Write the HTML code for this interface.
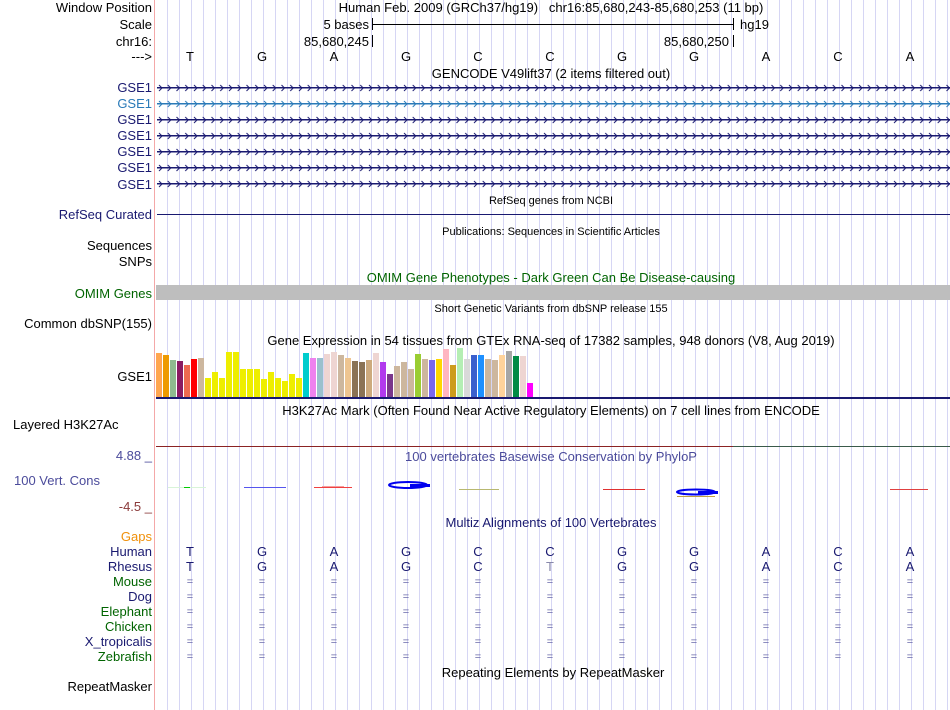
<!DOCTYPE html>
<html><head><meta charset="utf-8"><style>
html,body{margin:0;padding:0;background:#fff;width:950px;height:710px;overflow:hidden}
svg{display:block;font-family:"Liberation Sans",sans-serif}
</style></head><body>
<svg width="950" height="710" viewBox="0 0 950 710" xmlns="http://www.w3.org/2000/svg">
<defs>
<pattern id="grid" x="155" y="0" width="12" height="710" patternUnits="userSpaceOnUse">
<rect x="0" y="0" width="1" height="710" fill="#d6d6f4"/>
</pattern>
<pattern id="cD" x="0" y="0" width="8.75" height="8" patternUnits="userSpaceOnUse"><path d="M2,1 L5,4 L2,7" fill="none" stroke="#191970" stroke-width="1"/></pattern>
<pattern id="cL" x="0" y="0" width="8.75" height="8" patternUnits="userSpaceOnUse"><path d="M2,1 L5,4 L2,7" fill="none" stroke="#2a7ab8" stroke-width="1"/></pattern>
</defs>
<rect x="156" y="0" width="794" height="710" fill="url(#grid)"/>
<rect x="154" y="0" width="1" height="710" fill="#f4a8a8"/>

<g font-size="13" fill="#000" text-anchor="end">
<text x="152" y="12">Window Position</text>
<text x="152" y="29">Scale</text>
<text x="152" y="46">chr16:</text>
<text x="152" y="61">---&gt;</text>
</g>
<g font-size="13" fill="#191970" text-anchor="end">
<text x="152" y="92">GSE1</text>
<text x="152" y="108" fill="#2a7ab8">GSE1</text>
<text x="152" y="124">GSE1</text>
<text x="152" y="140">GSE1</text>
<text x="152" y="156">GSE1</text>
<text x="152" y="172">GSE1</text>
<text x="152" y="189">GSE1</text>
<text x="152" y="219">RefSeq Curated</text>
</g>
<g font-size="13" fill="#000" text-anchor="end">
<text x="152" y="250">Sequences</text>
<text x="152" y="266">SNPs</text>
<text x="152" y="298" fill="#006400">OMIM Genes</text>
<text x="152" y="328">Common dbSNP(155)</text>
<text x="152" y="381">GSE1</text>
</g>
<text x="13" y="429" font-size="13">Layered H3K27Ac</text>
<g font-size="13" text-anchor="end">
<text x="152" y="460" fill="#4b4b9b">4.88 _</text>
<text x="100" y="485" fill="#4b4b9b">100 Vert. Cons</text>
<text x="152" y="511" fill="#8b3a3a">-4.5 _</text>
<text x="152" y="541" fill="#f0900a">Gaps</text>
<text x="152" y="556" fill="#191970">Human</text>
<text x="152" y="571" fill="#191970">Rhesus</text>
<text x="152" y="586" fill="#006400">Mouse</text>
<text x="152" y="601" fill="#191970">Dog</text>
<text x="152" y="616" fill="#006400">Elephant</text>
<text x="152" y="631" fill="#006400">Chicken</text>
<text x="152" y="646" fill="#191970">X_tropicalis</text>
<text x="152" y="661" fill="#006400">Zebrafish</text>
<text x="152" y="691" fill="#000">RepeatMasker</text>
</g>

<!-- header -->
<g font-size="13" fill="#000">
<text x="551" y="12" text-anchor="middle">Human Feb. 2009 (GRCh37/hg19)&#160;&#160;&#160;chr16:85,680,243-85,680,253 (11 bp)</text>
<text x="369" y="29" text-anchor="end">5 bases</text>
<text x="740" y="29">hg19</text>
<text x="369" y="46" text-anchor="end">85,680,245</text>
<text x="729" y="46" text-anchor="end">85,680,250</text>
</g>
<rect x="372" y="18" width="1" height="12" fill="#000"/>
<rect x="372" y="24" width="362" height="1" fill="#000"/>
<rect x="733" y="18" width="1" height="12" fill="#000"/>
<rect x="372" y="35" width="1" height="12" fill="#000"/>
<rect x="733" y="35" width="1" height="12" fill="#000"/>
<g font-size="13" fill="#000" text-anchor="middle">
<text x="190" y="61">T</text><text x="262" y="61">G</text><text x="334" y="61">A</text><text x="406" y="61">G</text><text x="478" y="61">C</text><text x="550" y="61">C</text><text x="622" y="61">G</text><text x="694" y="61">G</text><text x="766" y="61">A</text><text x="838" y="61">C</text><text x="910" y="61">A</text>
<text x="551" y="78">GENCODE V49lift37 (2 items filtered out)</text>
</g>

<!-- GSE1 transcripts -->
<rect x="157" y="87" width="793" height="1.5" fill="#191970"/>
<rect x="157" y="103" width="793" height="1.5" fill="#2a7ab8"/>
<rect x="157" y="119" width="793" height="1.5" fill="#191970"/>
<rect x="157" y="135" width="793" height="1.5" fill="#191970"/>
<rect x="157" y="151" width="793" height="1.5" fill="#191970"/>
<rect x="157" y="167" width="793" height="1.5" fill="#191970"/>
<rect x="157" y="183" width="793" height="1.5" fill="#191970"/>
<g transform="translate(157,84)"><rect width="793" height="8" fill="url(#cD)"/></g>
<g transform="translate(157,100)"><rect width="793" height="8" fill="url(#cL)"/></g>
<g transform="translate(157,116)"><rect width="793" height="8" fill="url(#cD)"/></g>
<g transform="translate(157,132)"><rect width="793" height="8" fill="url(#cD)"/></g>
<g transform="translate(157,148)"><rect width="793" height="8" fill="url(#cD)"/></g>
<g transform="translate(157,164)"><rect width="793" height="8" fill="url(#cD)"/></g>
<g transform="translate(157,180)"><rect width="793" height="8" fill="url(#cD)"/></g>

<text x="551" y="204" font-size="11" text-anchor="middle">RefSeq genes from NCBI</text>
<rect x="157" y="214" width="793" height="1" fill="#191970"/>
<text x="551" y="235" font-size="11" text-anchor="middle">Publications: Sequences in Scientific Articles</text>
<text x="551" y="282" font-size="13" text-anchor="middle" fill="#006400">OMIM Gene Phenotypes - Dark Green Can Be Disease-causing</text>
<rect x="156" y="285" width="794" height="15" fill="#bebebe"/>
<text x="551" y="312" font-size="11" text-anchor="middle">Short Genetic Variants from dbSNP release 155</text>
<text x="551" y="345" font-size="13" text-anchor="middle">Gene Expression in 54 tissues from GTEx RNA-seq of 17382 samples, 948 donors (V8, Aug 2019)</text>

<!-- GTEx bars -->
<g>
<rect x="156" y="353" width="6" height="44" fill="#FFA54F"/>
<rect x="163" y="355" width="6" height="42" fill="#EE9A00"/>
<rect x="170" y="360" width="6" height="37" fill="#8FBC8F"/>
<rect x="177" y="361" width="6" height="36" fill="#8B1C62"/>
<rect x="184" y="365" width="6" height="32" fill="#EE6A50"/>
<rect x="191" y="359" width="6" height="38" fill="#FF0000"/>
<rect x="198" y="358" width="6" height="39" fill="#CDB79E"/>
<rect x="205" y="378" width="6" height="19" fill="#EEEE00"/>
<rect x="212" y="372" width="6" height="25" fill="#EEEE00"/>
<rect x="219" y="378" width="6" height="19" fill="#EEEE00"/>
<rect x="226" y="352" width="6" height="45" fill="#EEEE00"/>
<rect x="233" y="352" width="6" height="45" fill="#EEEE00"/>
<rect x="240" y="369" width="6" height="28" fill="#EEEE00"/>
<rect x="247" y="369" width="6" height="28" fill="#EEEE00"/>
<rect x="254" y="369" width="6" height="28" fill="#EEEE00"/>
<rect x="261" y="379" width="6" height="18" fill="#EEEE00"/>
<rect x="268" y="372" width="6" height="25" fill="#EEEE00"/>
<rect x="275" y="378" width="6" height="19" fill="#EEEE00"/>
<rect x="282" y="381" width="6" height="16" fill="#EEEE00"/>
<rect x="289" y="374" width="6" height="23" fill="#EEEE00"/>
<rect x="296" y="378" width="6" height="19" fill="#EEEE00"/>
<rect x="303" y="353" width="6" height="44" fill="#00CDCD"/>
<rect x="310" y="358" width="6" height="39" fill="#EE82EE"/>
<rect x="317" y="358" width="6" height="39" fill="#9AC0CD"/>
<rect x="324" y="354" width="6" height="43" fill="#EED5D2"/>
<rect x="331" y="352" width="6" height="45" fill="#EED5D2"/>
<rect x="338" y="355" width="6" height="42" fill="#CDB79E"/>
<rect x="345" y="358" width="6" height="39" fill="#EEC591"/>
<rect x="352" y="361" width="6" height="36" fill="#8B7355"/>
<rect x="359" y="362" width="6" height="35" fill="#8B7355"/>
<rect x="366" y="360" width="6" height="37" fill="#CDAA7D"/>
<rect x="373" y="353" width="6" height="44" fill="#EED5D2"/>
<rect x="380" y="362" width="6" height="35" fill="#B23AEE"/>
<rect x="387" y="374" width="6" height="23" fill="#7A378B"/>
<rect x="394" y="366" width="6" height="31" fill="#CDB79E"/>
<rect x="401" y="362" width="6" height="35" fill="#CDB79E"/>
<rect x="408" y="369" width="6" height="28" fill="#CDB79E"/>
<rect x="415" y="354" width="6" height="43" fill="#9ACD32"/>
<rect x="422" y="359" width="6" height="38" fill="#CDB79E"/>
<rect x="429" y="360" width="6" height="37" fill="#7A67EE"/>
<rect x="436" y="359" width="6" height="38" fill="#FFD700"/>
<rect x="443" y="349" width="6" height="48" fill="#FFB6C1"/>
<rect x="450" y="365" width="6" height="32" fill="#CD9B1D"/>
<rect x="457" y="348" width="6" height="49" fill="#B4EEB4"/>
<rect x="464" y="359" width="6" height="38" fill="#D9D9D9"/>
<rect x="471" y="355" width="6" height="42" fill="#3A5FCD"/>
<rect x="478" y="355" width="6" height="42" fill="#1E90FF"/>
<rect x="485" y="359" width="6" height="38" fill="#CDB79E"/>
<rect x="492" y="360" width="6" height="37" fill="#CDB79E"/>
<rect x="499" y="355" width="6" height="42" fill="#FFD39B"/>
<rect x="506" y="351" width="6" height="46" fill="#A6A6A6"/>
<rect x="513" y="356" width="6" height="41" fill="#008B45"/>
<rect x="520" y="356" width="6" height="41" fill="#EED5D2"/>
<rect x="527" y="383" width="6" height="14" fill="#FF00FF"/>
</g>
<rect x="156" y="397" width="794" height="2" fill="#191970"/>

<text x="551" y="415" font-size="13" text-anchor="middle">H3K27Ac Mark (Often Found Near Active Regulatory Elements) on 7 cell lines from ENCODE</text>
<rect x="156" y="446" width="577" height="1" fill="#8b2323"/>
<rect x="733" y="446" width="217" height="1" fill="#3a5a4a"/>

<text x="551" y="461" font-size="13" text-anchor="middle" fill="#4b4b9b">100 vertebrates Basewise Conservation by PhyloP</text>
<rect x="168" y="487" width="38" height="1" fill="#d8f4d8"/><rect x="184" y="487" width="6" height="1" fill="#00cc00"/>
<rect x="244" y="487" width="42" height="1" fill="#5555ee"/>
<rect x="314" y="487" width="38" height="1" fill="#f04040"/><rect x="322" y="486" width="22" height="1" fill="#f5a0a0"/>
<ellipse cx="408" cy="485" rx="19" ry="3" fill="none" stroke="#0000ee" stroke-width="2"/>
<rect x="410" y="484" width="20" height="3" fill="#0000ee"/>
<rect x="459" y="489" width="40" height="1" fill="#b8b870"/>
<rect x="603" y="489" width="42" height="1" fill="#e03030"/>
<ellipse cx="696" cy="492" rx="19" ry="2.5" fill="none" stroke="#0000ee" stroke-width="2"/>
<rect x="698" y="491" width="20" height="3" fill="#0000ee"/>
<rect x="677" y="496" width="38" height="1" fill="#c0a040"/>
<rect x="890" y="489" width="38" height="1" fill="#e04040"/>

<text x="551" y="527" font-size="13" text-anchor="middle" fill="#191970">Multiz Alignments of 100 Vertebrates</text>
<g font-size="13" fill="#191970" text-anchor="middle">
<text x="190" y="556">T</text><text x="262" y="556">G</text><text x="334" y="556">A</text><text x="406" y="556">G</text><text x="478" y="556">C</text><text x="550" y="556">C</text><text x="622" y="556">G</text><text x="694" y="556">G</text><text x="766" y="556">A</text><text x="838" y="556">C</text><text x="910" y="556">A</text>
<text x="190" y="571">T</text><text x="262" y="571">G</text><text x="334" y="571">A</text><text x="406" y="571">G</text><text x="478" y="571">C</text><text x="550" y="571" fill="#8888aa">T</text><text x="622" y="571">G</text><text x="694" y="571">G</text><text x="766" y="571">A</text><text x="838" y="571">C</text><text x="910" y="571">A</text>
</g>
<g font-size="11" fill="#6a6aaa" text-anchor="middle">
<text x="190" y="585">=</text><text x="262" y="585">=</text><text x="334" y="585">=</text><text x="406" y="585">=</text><text x="478" y="585">=</text><text x="550" y="585">=</text><text x="622" y="585">=</text><text x="694" y="585">=</text><text x="766" y="585">=</text><text x="838" y="585">=</text><text x="910" y="585">=</text>
<text x="190" y="600">=</text><text x="262" y="600">=</text><text x="334" y="600">=</text><text x="406" y="600">=</text><text x="478" y="600">=</text><text x="550" y="600">=</text><text x="622" y="600">=</text><text x="694" y="600">=</text><text x="766" y="600">=</text><text x="838" y="600">=</text><text x="910" y="600">=</text>
<text x="190" y="615">=</text><text x="262" y="615">=</text><text x="334" y="615">=</text><text x="406" y="615">=</text><text x="478" y="615">=</text><text x="550" y="615">=</text><text x="622" y="615">=</text><text x="694" y="615">=</text><text x="766" y="615">=</text><text x="838" y="615">=</text><text x="910" y="615">=</text>
<text x="190" y="630">=</text><text x="262" y="630">=</text><text x="334" y="630">=</text><text x="406" y="630">=</text><text x="478" y="630">=</text><text x="550" y="630">=</text><text x="622" y="630">=</text><text x="694" y="630">=</text><text x="766" y="630">=</text><text x="838" y="630">=</text><text x="910" y="630">=</text>
<text x="190" y="645">=</text><text x="262" y="645">=</text><text x="334" y="645">=</text><text x="406" y="645">=</text><text x="478" y="645">=</text><text x="550" y="645">=</text><text x="622" y="645">=</text><text x="694" y="645">=</text><text x="766" y="645">=</text><text x="838" y="645">=</text><text x="910" y="645">=</text>
<text x="190" y="660">=</text><text x="262" y="660">=</text><text x="334" y="660">=</text><text x="406" y="660">=</text><text x="478" y="660">=</text><text x="550" y="660">=</text><text x="622" y="660">=</text><text x="694" y="660">=</text><text x="766" y="660">=</text><text x="838" y="660">=</text><text x="910" y="660">=</text>
</g>
<text x="553" y="677" font-size="13" text-anchor="middle">Repeating Elements by RepeatMasker</text>
</svg>
</body></html>
